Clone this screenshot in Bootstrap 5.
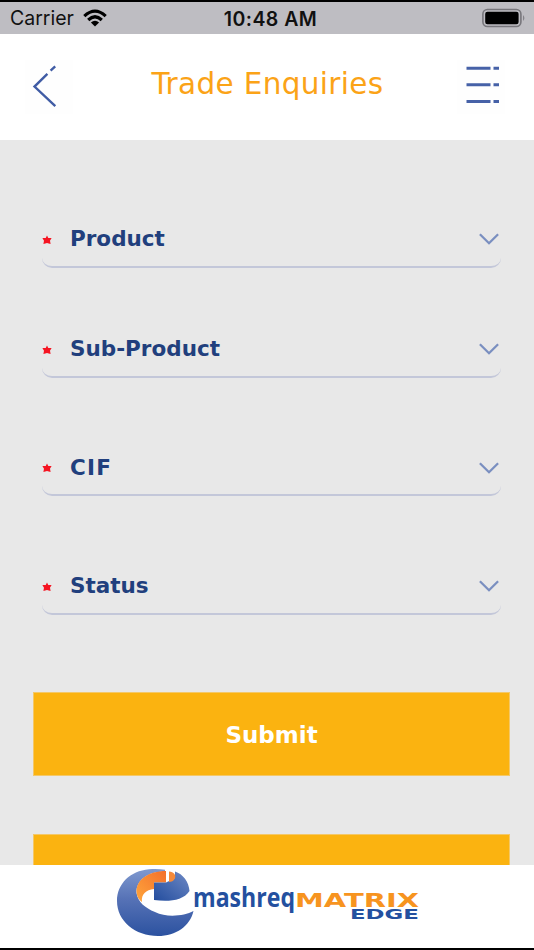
<!DOCTYPE html>
<html lang="en">
<head>
<meta charset="utf-8">
<meta name="viewport" content="width=device-width, initial-scale=1">
<title>Trade Enquiries</title>
<link href="https://cdn.jsdelivr.net/npm/bootstrap@5.3.0/dist/css/bootstrap.min.css" rel="stylesheet">
<style>
body{height:950px;background:#e8e8e8;font-family:"DejaVu Sans",sans-serif}
.status-bar{height:34px;flex:none;background:#bebdc2;border-top:2px solid #000;font:400 19.5px/32px Inter,sans-serif;color:#111;padding:0 8px 0 10px}
.status-bar .clock{font-weight:600;letter-spacing:.45px;left:0;right:0;padding-left:7px;padding-top:1px}
.app-header{height:105.5px;flex:none;padding:0 29px 0 25px}
.icon-btn{width:48px;height:54px;background:#fefefe;border:0;padding:0;margin-top:1px}
.app-header h1{font-size:29.5px;letter-spacing:.33px;color:#fba317;margin:-6px 0 0 5px;line-height:40px}
.form-area{padding:70px 33px 0 42px;min-height:0}
.field{height:58px;border:0;border-bottom:2px solid #c3c7d9;border-radius:10px;background:transparent;padding:0 2px 0 0;color:#213f7d;font-size:21.5px;font-weight:700;text-align:left}
.field .star{width:10px;margin-right:18px;margin-top:4px}
.field span{padding-top:4px}
.field .chevron{margin-top:3px}
.short-label{letter-spacing:1.2px}
.gap-a{margin-bottom:52px}.gap-b{margin-bottom:60.5px}
.action{height:84px;flex:none;margin:0 -9px 58px -9px;background:#fbb310;border:1px solid #f4c868;border-radius:0;color:#fff;font-size:23px;font-weight:700;padding:4px 0 0}
.action:hover{background:#fbb310;color:#fff}
.first-action{margin-top:77px}
.app-footer{height:85px;flex:none;border-bottom:2px solid #000;padding-left:110px}
</style>
</head>
<body class="d-flex flex-column overflow-hidden m-0">
<div class="status-bar d-flex align-items-center justify-content-between position-relative">
  <div class="d-flex align-items-center">
    <span>Carrier</span>
    <svg class="ms-2" width="26" height="20" viewBox="0 0 26 20" fill="none" stroke="#000" stroke-width="3.2"><path d="M2.3 8.1Q13-1.9 23.7 8.1M6.2 12Q13 5.6 19.8 12"/><path d="M8.9 14.4Q13 10.9 17.1 14.4L13 18.4Z" fill="#000" stroke="none"/></svg>
  </div>
  <span class="clock position-absolute text-center">10:48 AM</span>
  <svg width="44" height="20" viewBox="0 0 44 20"><rect x=".9" y="1.5" width="38" height="17" rx="4.5" fill="none" stroke="#77767b" stroke-width="1.6"/><rect x="3.2" y="3.8" width="33.4" height="12.4" rx="2.2"/><path d="M41.2 7Q43.5 10 41.2 13Z" fill="#77767b"/></svg>
</div>
<header class="app-header d-flex align-items-center justify-content-between bg-white">
  <button class="icon-btn" aria-label="Back"><svg class="d-block" width="48" height="54" viewBox="0 0 48 54" fill="none" stroke="#405ca5" stroke-width="2.4"><path d="M22.4 13.8 9.5 26.6 30.3 46.2M25.6 10.6 30.2 6.4"/></svg></button>
  <h1>Trade Enquiries</h1>
  <button class="icon-btn" aria-label="Menu"><svg class="d-block" width="48" height="54" viewBox="0 0 48 54" stroke="#4661a7" stroke-width="3"><path d="M9.5 8.2h24M36.5 8.2h5.5M9.5 24.8h24M36.5 24.8h5.5M9.5 41.5h24M36.5 41.5h5.5"/></svg></button>
</header>
<main class="form-area d-flex flex-column flex-grow-1 overflow-hidden">
  <button class="field gap-a d-flex align-items-center flex-shrink-0"><svg class="star" height="10" viewBox="0 0 10 10"><path fill="#f51522" d="M5 .5 6.3 3.1H9.6L8 5.8 8.6 9 5 8 1.4 9 2 5.8.4 3.1H3.7Z"/></svg><span class="flex-grow-1">Product</span><svg class="chevron" width="20" height="12" viewBox="0 0 20 12" fill="none" stroke="#7a8fc0" stroke-width="2.3"><path d="m.9 1.2 9.1 9 9.1-9"/></svg></button>
  <button class="field gap-b d-flex align-items-center flex-shrink-0"><svg class="star" height="10" viewBox="0 0 10 10"><path fill="#f51522" d="M5 .5 6.3 3.1H9.6L8 5.8 8.6 9 5 8 1.4 9 2 5.8.4 3.1H3.7Z"/></svg><span class="flex-grow-1">Sub-Product</span><svg class="chevron" width="20" height="12" viewBox="0 0 20 12" fill="none" stroke="#7a8fc0" stroke-width="2.3"><path d="m.9 1.2 9.1 9 9.1-9"/></svg></button>
  <button class="field gap-b d-flex align-items-center flex-shrink-0"><svg class="star" height="10" viewBox="0 0 10 10"><path fill="#f51522" d="M5 .5 6.3 3.1H9.6L8 5.8 8.6 9 5 8 1.4 9 2 5.8.4 3.1H3.7Z"/></svg><span class="flex-grow-1 short-label">CIF</span><svg class="chevron" width="20" height="12" viewBox="0 0 20 12" fill="none" stroke="#7a8fc0" stroke-width="2.3"><path d="m.9 1.2 9.1 9 9.1-9"/></svg></button>
  <button class="field d-flex align-items-center flex-shrink-0"><svg class="star" height="10" viewBox="0 0 10 10"><path fill="#f51522" d="M5 .5 6.3 3.1H9.6L8 5.8 8.6 9 5 8 1.4 9 2 5.8.4 3.1H3.7Z"/></svg><span class="flex-grow-1">Status</span><svg class="chevron" width="20" height="12" viewBox="0 0 20 12" fill="none" stroke="#7a8fc0" stroke-width="2.3"><path d="m.9 1.2 9.1 9 9.1-9"/></svg></button>
  <button class="btn action first-action">Submit</button>
  <button class="btn action" aria-label="Clear"></button>
</main>
<footer class="app-footer bg-white">
  <svg class="d-block" width="320" height="82" viewBox="110 865 320 82">
    <defs>
      <linearGradient id="ball" x1="0" y1="0" x2="0" y2="1"><stop offset="0" stop-color="#7f99cf"/><stop offset=".45" stop-color="#5672b6"/><stop offset="1" stop-color="#2c52a0"/></linearGradient>
      <linearGradient id="flame" x1="1" y1="0" x2="0" y2="1"><stop offset="0" stop-color="#f3702c"/><stop offset="1" stop-color="#ffa63c"/></linearGradient>
      <linearGradient id="wedge" x1="0" y1="1" x2="1" y2="0"><stop offset="0" stop-color="#234d9e"/><stop offset="1" stop-color="#6f8ac5"/></linearGradient>
    </defs>
    <path fill="url(#ball)" d="M165 869.8C160 868.8 154 868.6 149 869.3C130 871 117 884 117 901C117 921 135 936 158 936C176 936 190 926 193.5 911C184 916 167 918 155 912C145 908 138 902 136.5 893C136 880 148 871.5 165 871.5Z"/>
    <path fill="url(#flame)" d="M166 871C148 871 136 880 136.5 892C137 897 139 900 142 902C141 894 146 890 154 889V882.5H166Z"/>
    <path fill="url(#wedge)" d="M154 882.500H166L175 878V871.500C183 874 189 882 189.500 891C183 901 168 902 154 900Z"/>
    <path fill="#f58a3a" d="M169 871.5C174 872 176 875 175 878C174 881 171 882 169 882Z"/>
    <path d="M167.500 869V881" stroke="#fff" stroke-width="2.500"/>
    <text x="193" y="906.5" font-family="Open Sans,sans-serif" font-weight="700" font-size="26" fill="#24509f" textLength="102" lengthAdjust="spacingAndGlyphs">mashreq</text>
    <text x="295" y="907" font-family="DejaVu Sans,sans-serif" font-weight="700" font-size="19" fill="#f7941f" textLength="124" lengthAdjust="spacingAndGlyphs">MATRIX</text>
    <text x="350" y="919.3" font-family="DejaVu Sans,sans-serif" font-weight="700" font-size="13.5" fill="#24509f" textLength="69" lengthAdjust="spacingAndGlyphs">EDGE</text>
  </svg>
</footer>
<script src="https://cdn.jsdelivr.net/npm/bootstrap@5.3.0/dist/js/bootstrap.bundle.min.js"></script>
</body>
</html>
